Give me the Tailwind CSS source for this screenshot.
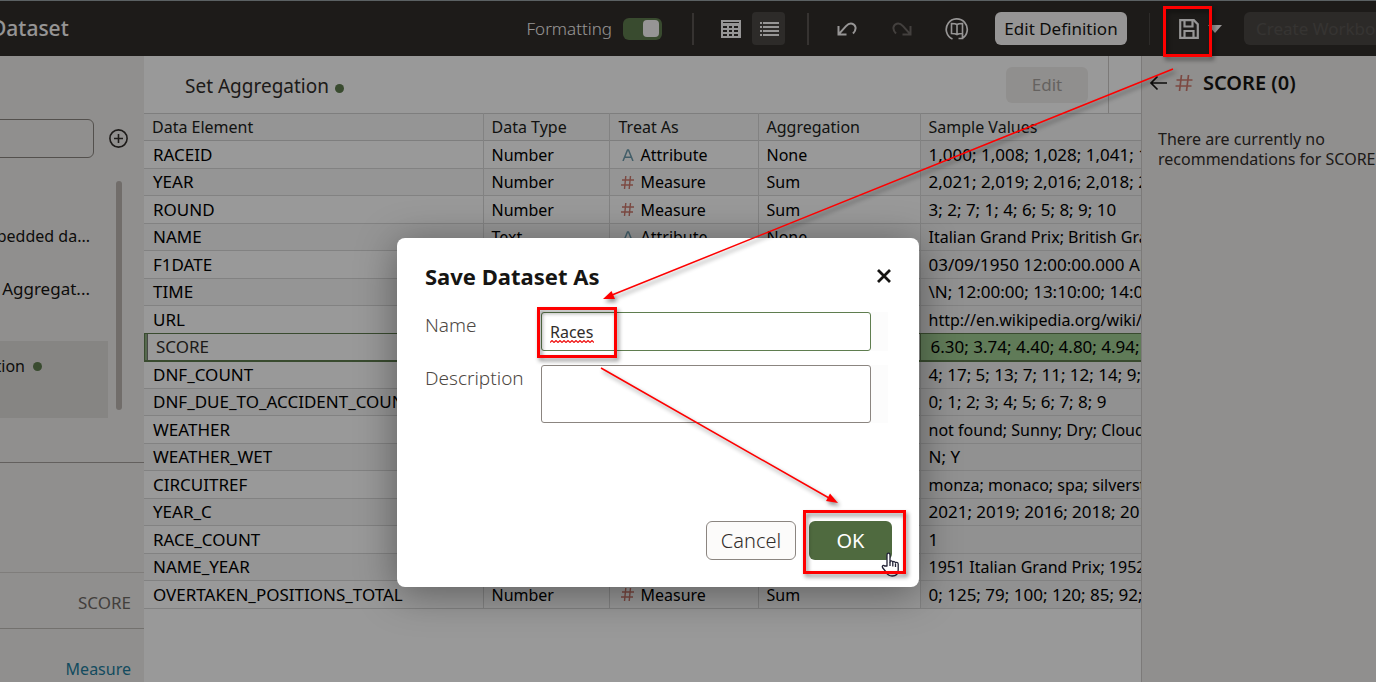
<!DOCTYPE html>
<html lang="en">
<head>
<meta charset="utf-8">
<title>Dataset</title>
<script src="https://cdn.jsdelivr.net/npm/@tailwindcss/browser@4"></script>
</head>
<body class="relative flex h-screen flex-col overflow-hidden bg-white font-['Noto_Sans',sans-serif] text-base text-[#161513]">

<header class="flex h-14 shrink-0 items-center overflow-hidden border-t border-[#98a2a6] bg-[#312d2a] text-white">
  <h1 class="-ml-[9px] flex-1 text-[21px] font-medium text-[#fbf9f8]">Dataset</h1>
  <label for="formatting" class="text-[17px] font-light text-[#fbf9f8]">Formatting</label>
  <input id="formatting" type="checkbox" role="switch" checked class="peer sr-only">
  <label for="formatting" class="ml-[11px] flex h-[22px] w-[39px] items-center justify-end rounded-md bg-[#5f7d4f] p-[3px]" aria-hidden="true">
    <span class="h-[17px] w-4 rounded bg-[#fbf9f8]"></span>
  </label>
  <span class="ml-[30px] h-8 w-[2px] bg-[#5b5652]"></span>
  <button aria-label="Grid view" class="ml-[21px] flex size-8 items-center justify-center">
    <svg class="size-5" viewBox="0 0 20 20"><path fill="#fbf9f8" fill-rule="evenodd" d="M0 1h20v18H0zM2 3v1h16V3zM2 7v2h4V7zM8 7v2h3V7zM13 7v2h4V7zM2 11v2h4v-2zM8 11v2h3v-2zM13 11v2h4v-2zM2 15v2h4v-2zM8 15v2h3v-2zM13 15v2h4v-2z"/></svg>
  </button>
  <button aria-label="List view" class="ml-[5px] flex h-[33px] w-[33px] items-center justify-center rounded bg-[#4b4845]">
    <svg class="size-5" viewBox="0 0 20 20" fill="none" stroke="#fbf9f8" stroke-width="2"><path d="M4 4H20M4 8H20M4 12H20M4 16H20"/><path d="M1 4h2M1 8h2M1 12h2M1 16h2"/></svg>
  </button>
  <span class="ml-[22px] h-8 w-[2px] bg-[#5b5652]"></span>
  <button aria-label="Undo" class="ml-[22px] flex size-8 items-center justify-center">
    <svg class="size-5" viewBox="0 0 20 20" fill="none" stroke="#fbf9f8" stroke-width="2"><path d="M1.500 7v8.500H9.500M1.800 15.200 9 7.200C11 5 13 4 15.200 4.700 18.800 5.800 20.200 10.200 16 14.500"/></svg>
  </button>
  <button aria-label="Redo" disabled class="ml-[23px] flex size-8 items-center justify-center">
    <svg class="size-5" viewBox="0 0 20 20" fill="none" stroke="#716c68" stroke-width="2"><path d="M18.500 7v8.500H10.500M18.200 15.200 11 7.200C9 5 7 4 4.800 4.700 1.200 5.800-.2 10.200 4 14.500"/></svg>
  </button>
  <button aria-label="Refresh data" class="ml-[23px] flex size-8 items-center justify-center">
    <svg class="size-6" viewBox="0 0 24 24" fill="none" stroke="#fbf9f8" stroke-width="1.700"><path d="M7.500 22A10.500 10.500 0 1 1 17 21.500M13.500 21.500h4V17"/><path d="M12 7.500C10.500 6.500 9 6.500 6.500 6.500v10c2.500 0 4 0 5.500 1 1.500-1 3-1 5.500-1v-10c-2.500 0-4 0-5.500 1zV17.500" stroke-width="1.600"/></svg>
  </button>
  <button class="ml-[22px] h-[33px] w-[132px] shrink-0 rounded-md bg-[#fbf9f8] text-[17px] text-[#161513]">Edit Definition</button>
  <span class="ml-[22px] h-8 w-px bg-[#4b4845]"></span>
  <button aria-label="Save" class="ml-[23px] flex size-8 items-center justify-center">
    <svg class="size-5" viewBox="0 0 20 20" fill="none" stroke="#fbf9f8" stroke-width="2.200"><path d="M1.200 1.200h13.600l4 4v13.600H1.200z"/><path d="M5.500 1v6.500h8V1M5.500 19v-7h9V19"/></svg>
  </button>
  <button aria-label="Save options" class="ml-[3px] flex w-[14px] items-center justify-center">
    <svg class="h-2 w-[14px]" viewBox="0 0 14 8" fill="#fbf9f8"><path d="M0 0h14L7 8z"/></svg>
  </button>
  <button disabled class="ml-[22px] h-[33px] w-[132px] shrink-0 overflow-hidden whitespace-nowrap rounded-l-md bg-[#4a4744] pl-3 text-left text-[17px] text-[#5b5754]">Create Workbook</button>
</header>

<div class="flex min-h-0 flex-1">
  <aside class="flex w-36 shrink-0 flex-col overflow-hidden bg-[#f1efed]">
    <div class="mt-[63px] flex h-[39px] shrink-0 items-center">
      <input aria-label="Search" class="-ml-2 h-[39px] w-[102px] rounded-md border border-[#8b8580] px-3">
      <button aria-label="Add step" class="ml-[15px]">
        <svg class="size-[19px]" viewBox="0 0 19 19" fill="none" stroke="#312d2a" stroke-width="1.600"><circle cx="9.500" cy="9.500" r="8.600"/><path d="M9.500 5v9M5 9.500h9"/></svg>
      </button>
    </div>
    <div class="mt-[23px] flex h-[229px] shrink-0 items-stretch justify-between pr-[22px]">
      <ul class="w-[108px] whitespace-nowrap">
        <li class="mt-[43px] flex h-6 w-[90px] items-center justify-end">bedded da...</li>
        <li class="mt-[29px] flex h-6 w-[90px] items-center justify-end text-[17px]">Aggregat...</li>
        <li class="mt-10 flex h-[77px] items-start bg-[#e0dedb] pt-[13px]"><span class="flex w-[25px] justify-end">tion</span><span class="mt-2 ml-2 size-[9px] rounded-full bg-[#5f7d4f]"></span></li>
      </ul>
      <div class="w-[6px] rounded-full bg-[#bcb6b1]"></div>
    </div>
    <div class="mt-[52px] h-[110px] shrink-0 border-t border-[#a5a19d]"></div>
    <div class="flex h-14 shrink-0 items-center justify-end border-t border-[#d4d1cd] pt-1 pr-[13px] text-[17px] text-[#6f6965]">SCORE</div>
    <div class="flex h-20 shrink-0 items-center justify-end border-t border-[#c0bcb8] pr-[13px]"><a href="#" class="text-[#227e9e]">Measure</a></div>
  </aside>

  <main class="flex min-w-0 flex-1 flex-col overflow-hidden">
    <div class="flex h-[57px] shrink-0 items-center pl-[41px]">
      <h2 class="flex-1 pt-1 text-[19px] text-[#312d2a]">Set Aggregation <span class="ml-px inline-block size-[9px] rounded-full bg-[#5f7d4f]"></span></h2>
      <button disabled class="h-[36px] w-[82px] rounded-md bg-[#f1efed] text-[17px] text-[#a8a4a0]">Edit</button>
      <span class="ml-5 h-full w-px bg-[#cfccca]"></span>
      <span class="w-8"></span>
    </div>
    <table class="w-full table-fixed border-collapse whitespace-nowrap text-left">
      <colgroup><col class="w-[339px]"><col class="w-[126px]"><col class="w-[149px]"><col class="w-[162px]"><col></colgroup>
      <thead>
        <tr class="h-[27px] border-y border-[#d3d3d3] bg-[#f8f8f8] text-[#201e1c]">
          <th class="p-0 pl-2 font-normal leading-[26px]">Data Element</th>
          <th class="border-l border-[#d9d9d9] p-0 pl-2 font-normal">Data Type</th>
          <th class="border-l border-[#d9d9d9] p-0 pl-[9px] font-normal">Treat As</th>
          <th class="border-l border-[#d9d9d9] p-0 pl-2 font-normal">Aggregation</th>
          <th class="border-l border-[#d9d9d9] p-0 pl-2 font-normal">Sample Values</th>
        </tr>
      </thead>
      <tbody id="rows" class="text-black"></tbody>
    </table>
  </main>

  <aside class="w-[235px] shrink-0 overflow-hidden border-l border-[#cfccca] bg-[#f1efed]">
    <div class="mt-[11px] flex h-8 items-center">
      <button aria-label="Back" class="ml-[7px]">
        <svg class="h-4 w-[18px]" viewBox="0 0 18 16" fill="none" stroke="#161513" stroke-width="1.700"><path d="M18 8H2M8.500 1.500 2 8l6.500 6.500"/></svg>
      </button>
      <svg class="ml-2 size-[18px]" viewBox="0 0 18 18" fill="none" stroke="#cf7a6e" stroke-width="1.700"><path d="M6.500 1 4.500 17M13.500 1 11.500 17M1.500 6H17.500M.5 12H16.500"/></svg>
      <h2 class="ml-[10px] text-xl font-semibold text-[#161513]">SCORE (0)</h2>
    </div>
    <p class="mt-[30px] pl-4 leading-5 text-[#312d2a]"><span class="whitespace-nowrap">There are currently no</span><br><span class="whitespace-nowrap">recommendations for SCORE.</span></p>
  </aside>
</div>

<div class="absolute inset-0 bg-black/40"></div>

<div role="dialog" aria-modal="true" aria-labelledby="dialog-title" class="absolute top-[238px] left-[397px] flex h-[349px] w-[522px] flex-col rounded-lg bg-white shadow-[0_6px_40px_rgba(0,0,0,0.4)]">
  <div class="flex items-center justify-between pt-6 pr-7 pl-7">
    <h2 id="dialog-title" class="text-[22px] leading-7 font-bold">Save Dataset As</h2>
    <button aria-label="Close"><svg class="size-[14px]" viewBox="0 0 14 14" fill="none" stroke="#161513" stroke-width="2.800"><path d="M1 1l12 12M13 1 1 13"/></svg></button>
  </div>
  <form id="save-form" class="flex flex-col gap-[14px] pt-[22px] pr-[31px] pl-7 text-[19px] leading-[26px] text-[#4d4843]">
    <div class="flex">
      <label for="name" class="w-[116px] font-light">Name</label>
      <div class="relative flex flex-1 bg-[#fcfcfc]">
        <input id="name" value="Races" spellcheck="false" class="h-[39px] w-[330px] rounded-[3px] border border-[#5f7d4f] bg-white px-2 text-base text-[#312d2a] outline-none">
        <svg class="pointer-events-none absolute top-7 left-[9px] h-[3px] w-11" viewBox="0 0 44 3" fill="none" stroke="#f01818" stroke-width="1.200"><path d="M0 2.500 2 .5l2 2 2-2 2 2 2-2 2 2 2-2 2 2 2-2 2 2 2-2 2 2 2-2 2 2 2-2 2 2 2-2 2 2 2-2 2 2 2-2 2 2"/></svg>
      </div>
    </div>
    <div class="flex">
      <label for="description" class="w-[116px] font-light">Description</label>
      <div class="flex flex-1 bg-[#fcfcfc]"><textarea id="description" class="h-[58px] w-[330px] resize-none rounded-[3px] border border-[#8b8580] bg-white p-2 text-base outline-none"></textarea></div>
    </div>
  </form>
  <div class="mt-auto flex justify-end gap-[13px] pr-[27px] pb-[27px] text-xl">
    <button class="h-[39px] w-[90px] rounded-md border border-[#8b8580] bg-[#fcfbfa] font-light text-[#312d2a]">Cancel</button>
    <button form="save-form" class="h-[39px] w-[83px] rounded-md bg-[#4f6a3f] font-normal text-white">OK</button>
  </div>
</div>

<!-- Pointer and walkthrough annotations -->
<svg class="absolute top-[552px] left-[881px] h-[26px] w-[19px]" viewBox="0 0 19 26" fill="white" stroke="#222236" stroke-width="1.300" stroke-linejoin="round"><path d="M6 14V3c0-2.400 3-2.400 3 0v7c0-1.500 2.800-1.500 2.800.5 0-1.500 2.700-1.300 2.700.7 0-1.300 2.700-1.200 2.700.8v6c0 3.500-2.200 6-6 6-3.500 0-5-1.500-6.200-4L1.500 15.500c-.8-1.700 1-2.800 2.200-1.500z"/><path d="M9 10v4M11.800 11v3.500M14.500 12v3" fill="none"/></svg>
<svg class="pointer-events-none absolute top-0 left-0 h-[682px] w-[1376px] drop-shadow-[2px_3px_2px_rgba(0,0,0,0.45)]" viewBox="0 0 1376 682" fill="none" stroke="#fe0000">
  <g stroke-width="3"><rect x="1164.500" y="7.500" width="46" height="48"/><rect x="538.500" y="308.500" width="77" height="48"/><rect x="804.500" y="511.500" width="100" height="61"/></g>
  <g stroke-width="1.500"><path d="M1173 69 612 295M601 368 829 498"/></g>
  <g fill="#fe0000" stroke="none"><path d="M603 299 611.500 291 615 299z"/><path d="M838 503 826 501 830 493.500z"/></g>
</svg>

<script>
const A = '<svg class="ml-px size-3" viewBox="0 0 12 12" fill="none" stroke="#6f9cae" stroke-width="1.500"><path d="M1 12 5.500 1h1L11 12M2.800 8.300h6.400"/></svg>';
const H = '<svg class="size-[13px]" viewBox="0 0 13 13" fill="none" stroke="#cf7a6e" stroke-width="1.400"><path d="M4.800 0 3.500 13M9.500 0 8.200 13M1 4H13M0 9H12"/></svg>';
const rows = [
  ['RACEID','Number','Attribute','None','1,000; 1,008; 1,028; 1,041; 1,052'],
  ['YEAR','Number','Measure','Sum','2,021; 2,019; 2,016; 2,018; 2,017'],
  ['ROUND','Number','Measure','Sum','3; 2; 7; 1; 4; 6; 5; 8; 9; 10'],
  ['NAME','Text','Attribute','None','Italian Grand Prix; British Grand Prix'],
  ['F1DATE','','','','03/09/1950 12:00:00.000 AM'],
  ['TIME','','','','\\N; 12:00:00; 13:10:00; 14:00:00'],
  ['URL','','','','http://en.wikipedia.org/wiki/1950'],
  ['SCORE','','','','6.30; 3.74; 4.40; 4.80; 4.94; 5.10'],
  ['DNF_COUNT','','','','4; 17; 5; 13; 7; 11; 12; 14; 9; 10'],
  ['DNF_DUE_TO_ACCIDENT_COUNT','','','','0; 1; 2; 3; 4; 5; 6; 7; 8; 9'],
  ['WEATHER','','','','not found; Sunny; Dry; Cloudy'],
  ['WEATHER_WET','','','','N; Y'],
  ['CIRCUITREF','','','','monza; monaco; spa; silverstone'],
  ['YEAR_C','','','','2021; 2019; 2016; 2018; 2017'],
  ['RACE_COUNT','','','','1'],
  ['NAME_YEAR','','','','1951 Italian Grand Prix; 1952'],
  ['OVERTAKEN_POSITIONS_TOTAL','Number','Measure','Sum','0; 125; 79; 100; 120; 85; 92; 60']
];
document.getElementById('rows').innerHTML = rows.map(([n, t, u, g, s], i) => {
  const sel = n === 'SCORE';
  const tr = sel ? 'h-[27px] border-y border-[#5f7d4f] bg-white outline outline-[#5f7d4f]' : i % 2 ? 'h-[27px] border-b border-[#d9d9d9] bg-[#f8f8f8]' : 'h-7 border-b border-[#d9d9d9] bg-white';
  const first = sel ? 'overflow-hidden p-0 pl-3 text-[17px] leading-5 text-[#312d2a] shadow-[inset_1px_0_0_#5f7d4f,inset_3px_0_0_#8fb083,inset_4px_0_0_#777777]' : 'overflow-hidden p-0 pl-[9px] text-[17px] leading-5';
  const size = /[a-z]{3}/.test(s) ? 'text-base' : 'text-[17px]';
  const last = sel ? 'overflow-hidden border-l border-[#5f7d4f] bg-[#a0cd93] p-0 pl-[10px]' : 'overflow-hidden border-l border-[#d9d9d9] bg-[#f2f2f2] p-0 pl-2';
  return `<tr class="${tr}"><td class="${first}">${n}</td><td class="border-l border-[#d9d9d9] p-0 pl-2 leading-5">${t}</td><td class="border-l border-[#d9d9d9] p-0 pl-[11px] leading-5">${u ? `<span class="flex items-center gap-[7px]">${u === 'Measure' ? H : A}${u}</span>` : ''}</td><td class="border-l border-[#d9d9d9] p-0 pl-2 leading-5">${g}</td><td class="${last}"><span class="${size} block leading-5">${s}</span></td></tr>`;
}).join('');
</script>
</body>
</html>
